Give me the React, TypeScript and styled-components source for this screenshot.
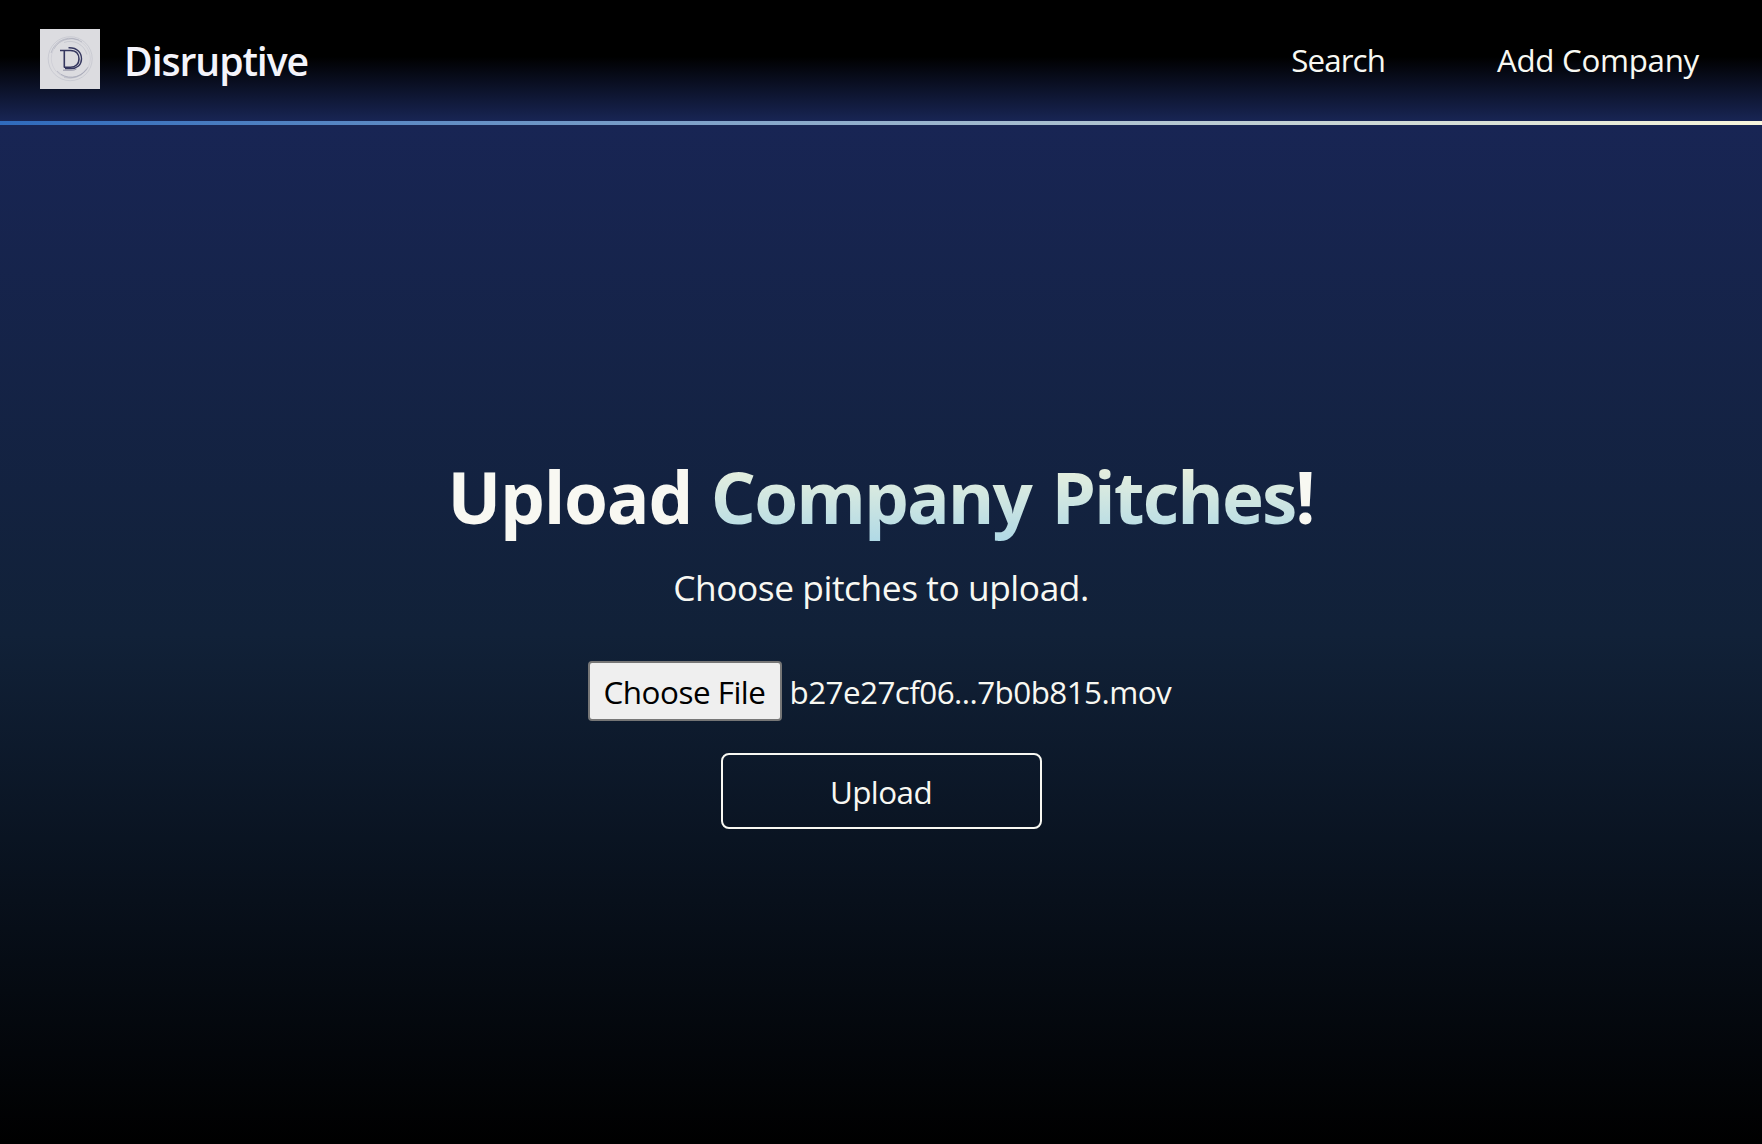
import React, { useState } from 'react'
import styled, { createGlobalStyle } from 'styled-components'

const GlobalStyle = createGlobalStyle`
  * {
    box-sizing: border-box;
  }
  body {
    margin: 0;
    background: #000;
    color: #f8f8f2;
    font-family: 'Segoe UI', 'Open Sans', 'Noto Sans', sans-serif;
  }
`

const Page = styled.div`
  display: flex;
  flex-direction: column;
  height: 100vh;
  min-height: 1144px;
`

const Header = styled.header`
  display: flex;
  align-items: center;
  justify-content: space-between;
  height: 121px;
  padding: 0 63px 3px 40px;
  background: linear-gradient(180deg, #000 47%, #182554 100%);
`

const Divider = styled.div`
  height: 4px;
  background: linear-gradient(90deg, #2f6abc, #f8f6dc);
`

const Brand = styled.div`
  display: flex;
  align-items: center;
  gap: 24px;
`

const Logo = styled.svg`
  display: block;
  width: 60px;
  height: 60px;
`

const BrandName = styled.span`
  font-size: 39.2px;
  font-weight: 600;
  line-height: 54px;
  letter-spacing: -1.08px;
  padding-top: 3px;
  color: #f4f4fb;
`

const Nav = styled.nav`
  display: flex;
  gap: 112px;
  padding-top: 2px;
`

const NavLink = styled.a<{ $spacing: number }>`
  font-size: 31.3px;
  line-height: 44px;
  letter-spacing: ${({ $spacing }) => $spacing}px;
  color: #f8f8f2;
  text-decoration: none;
`

const Main = styled.main`
  flex: 1;
  display: flex;
  flex-direction: column;
  align-items: center;
  padding-top: 324px;
  background: linear-gradient(180deg, #182554 0%, #112138 50%, #0a1422 70%, #000 100%);
`

const Title = styled.h1`
  margin: 0;
  font-size: 71px;
  font-weight: 700;
  line-height: 96px;
  letter-spacing: -1.25px;
  word-spacing: 1.5px;
  white-space: nowrap;
`

const Highlight = styled.span`
  letter-spacing: -1.95px;
  word-spacing: 4px;
  background: linear-gradient(180deg, #f5f5dc, #add8e6);
  -webkit-background-clip: text;
  background-clip: text;
  color: transparent;
`

const Subtitle = styled.p`
  margin: 18px 0 1px;
  font-size: 35.3px;
  line-height: 48px;
  letter-spacing: -0.43px;
`

const FileRow = styled.div`
  display: flex;
  align-items: center;
  gap: 8px;
  margin: 49px 4px 0 0;
`

const FileButton = styled.button`
  width: 194px;
  height: 60px;
  padding: 1px 0 0;
  border: 2px solid #767676;
  border-radius: 4px;
  background: #efefef;
  color: #000;
  font-family: inherit;
  font-size: 31.4px;
  letter-spacing: -0.48px;
  white-space: nowrap;
`

const FileName = styled.span`
  width: 381px;
  padding-top: 1px;
  font-size: 31.4px;
  line-height: 44px;
  letter-spacing: -0.55px;
  white-space: nowrap;
`

const UploadButton = styled.button`
  width: 321px;
  height: 76px;
  margin-top: 32px;
  padding: 0;
  border: 2px solid #f8f8f2;
  border-radius: 8px;
  background: transparent;
  color: #f8f8f2;
  font-family: inherit;
  font-size: 31.4px;
  letter-spacing: -0.55px;
`

const DisruptiveLogo = () => (
  <Logo viewBox="0 0 60 60" fill="none">
    <rect width="60" height="60" fill="#dcdce0" />
    <g stroke="#a3a5b5" strokeWidth="0.7">
      <circle cx="30.2" cy="29.7" r="22" opacity="0.45" />
      <circle cx="30.8" cy="29.5" r="19.5" opacity="0.3" />
      <path d="M11 24a20 20 0 0 1 31-11" opacity="0.8" />
      <path d="M14 20a20 20 0 0 1 25-9" opacity="0.6" />
      <path d="M24 13.5a17.5 17.5 0 0 1 23 12" opacity="0.5" />
      <path d="M17 42a19 19 0 0 0 30-2.5" opacity="0.8" />
      <path d="M21 45.5a19 19 0 0 0 27-7.500" opacity="0.7" />
      <path d="M24 48.5a20 20 0 0 0 22-8" opacity="0.6" />
    </g>
    <g stroke="#35375f">
      <path d="M20 21.5h10.500c6 0 8.500 4 8.500 8.500s-3 8.200-8.500 8.200h-6.500" strokeWidth="1.6" />
      <path d="M24.3 21.5v17" strokeWidth="1.6" />
      <path d="M28.5 18.8c9-.3 13 5 13 11 0 6.200-4.500 9.700-10.500 9.700h-6" strokeWidth="1.4" />
      <path d="M23 41.2h8c2.500 0 4-.3 5.500-1.200" strokeWidth="0.6" opacity="0.7" />
    </g>
  </Logo>
)

const App = () => {
  const [fileName] = useState('b27e27cf06...7b0b815.mov')

  return (
    <Page>
      <GlobalStyle />
      <Header>
        <Brand>
          <DisruptiveLogo />
          <BrandName>Disruptive</BrandName>
        </Brand>
        <Nav>
          <NavLink href="#" $spacing={-0.9}>Search</NavLink>
          <NavLink href="#" $spacing={-0.28}>Add Company</NavLink>
        </Nav>
      </Header>
      <Divider />
      <Main>
        <Title>
          Upload <Highlight>Company Pitches</Highlight>!
        </Title>
        <Subtitle>Choose pitches to upload.</Subtitle>
        <FileRow>
          <FileButton type="button">Choose File</FileButton>
          <FileName>{fileName}</FileName>
        </FileRow>
        <UploadButton type="button">Upload</UploadButton>
      </Main>
    </Page>
  )
}

export default App
